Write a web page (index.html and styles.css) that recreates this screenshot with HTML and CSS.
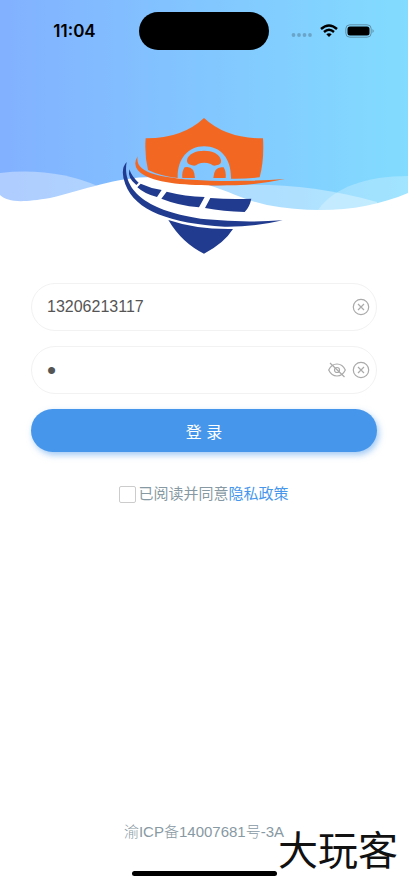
FILE: index.html
```html
<!DOCTYPE html>
<html lang="zh-CN">
<head>
    <meta charset="UTF-8">
    <meta name="viewport" content="width=device-width, initial-scale=1.0">
    <title>登录</title>
    <link rel="stylesheet" href="styles.css">
</head>
<body>
    <div class="page">
        <header class="hero">
            <svg class="waves" viewBox="0 0 408 218" preserveAspectRatio="none" aria-hidden="true">
                <path d="M0 173Q54 167 100 187L100 218H0Z" fill="#fff" fill-opacity=".36"/>
                <path d="M200 187C260 182 315 184 377 202L377 218H200Z" fill="#fff" fill-opacity=".36"/>
                <path d="M318 210C334 187 367 176 408 176V218H318Z" fill="#fff" fill-opacity=".25"/>
                <path d="M0 195C8 202 20 203 50 198C85 190 115 177 153 177C210 177 230 197 267 205C320 215 368 210 408 193V219H0Z" fill="#fff"/>
            </svg>

            <div class="status-bar">
                <span class="time">11:04</span>
                <span class="island"></span>
                <div class="status-icons">
                    <svg width="22" height="18" viewBox="0 0 22 18" fill="#6aa5c9" aria-hidden="true">
                        <circle cx="2.500" cy="13" r="1.900"/><circle cx="8" cy="13" r="1.900"/><circle cx="13.500" cy="13" r="1.900"/><circle cx="19" cy="13" r="1.900"/>
                    </svg>
                    <svg width="18" height="14" viewBox="0 0 18 14" fill="none" stroke="#000" stroke-width="2.4" aria-hidden="true">
                        <path d="M1 5Q9-2 17 5"/>
                        <path d="M4 8Q9 3.500 14 8"/>
                        <path d="M9 13L6.300 10.300Q9 8 11.700 10.300Z" fill="#000" stroke="none"/>
                    </svg>
                    <svg width="30" height="14" viewBox="0 0 30 14" aria-hidden="true">
                        <rect x=".8" y=".8" width="25.400" height="12.400" rx="4" fill="none" stroke="#5f91a8"/>
                        <rect x="2.500" y="2.500" width="22" height="9" rx="2.500"/>
                        <path d="M27.500 5Q30 7 27.500 9Z" fill="#5f91a8"/>
                    </svg>
                </div>
            </div>

            <svg class="logo" viewBox="-3 0 570 480" role="img" aria-label="logo">
                <path d="M107 100Q216 101 282 39Q349 101 459 100Q463 165 449 217Q405 222 363 221C364 161 333 124 282 124C233 124 202 163 203 219Q151 213 114 195Q103 150 107 100Z" fill="#f26822"/>
                <path d="M231 166C236 129 326 127 333 166Q335 179 319 181Q310 184 302 177Q282 169 264 177Q256 185 246 181Q230 178 231 166Z" fill="#f26822"/>
                <path d="M217 219Q215 199 224 187Q253 181 255 219ZM310 219Q312 182 341 187Q349 201 347 219Z" fill="#f26822"/>
                <path d="M83 154C73 203 145 220 300 227Q408 230 525 222Q455 237 377 241C262 243 154 240 103 211Q62 187 83 154Z" fill="#f26822"/>
                <path d="M50 171C38 236 80 317 290 343Q398 354 518 346Q435 366 344 365C181 356 75 317 46 238Q29 193 50 171Z" fill="#213b8f"/>
                <path d="M58 193Q66 216 86 233L79 240Q52 220 58 193ZM92 236Q122 250 155 255L141 276Q105 268 82 247ZM170 260Q225 274 284 276L267 307Q207 302 154 281ZM301 279Q362 284 424 281Q419 306 404 321Q340 319 285 309Z" fill="#213b8f"/>
                <path d="M175 345Q260 374 369 372Q342 415 282 446Q216 414 175 345Z" fill="#213b8f"/>
            </svg>
        </header>

        <form class="login-form">
            <div class="field">
                <input type="text" aria-label="手机号" value="13206213117">
                <button type="button" class="icon-btn" aria-label="清除手机号">
                    <svg viewBox="0 0 18 18"><circle cx="9" cy="9" r="7.700"/><path d="M6 6L12 12M12 6L6 12"/></svg>
                </button>
            </div>
            <div class="field">
                <input type="password" aria-label="密码" value="1">
                <button type="button" class="icon-btn" aria-label="显示密码">
                    <svg viewBox="0 0 18 18"><path d="M.7 9Q3.500 3 9 3T17.300 9Q14.500 15 9 15T.7 9ZM2 2L16.500 16"/><circle cx="9" cy="9" r="2.500"/></svg>
                </button>
                <button type="button" class="icon-btn" aria-label="清除密码">
                    <svg viewBox="0 0 18 18"><circle cx="9" cy="9" r="7.700"/><path d="M6 6L12 12M12 6L6 12"/></svg>
                </button>
            </div>
            <button type="submit" class="login-btn">登 录</button>
            <div class="agreement">
                <input type="checkbox" id="agree">
                <label for="agree">已阅读并同意</label><a href="#">隐私政策</a>
            </div>
        </form>

        <footer class="footer">
            <p>渝ICP备14007681号-3A</p>
            <div class="home-bar"></div>
        </footer>
        <div class="watermark">大玩客</div>
    </div>
</body>
</html>
```
FILE: styles.css
```css
* {
    box-sizing: border-box;
}

body {
    margin: 0;
    background-color: #fff;
    font-family: "Liberation Sans", "Noto Sans CJK SC", sans-serif;
}

.page {
    position: relative;
    display: flex;
    flex-direction: column;
    min-height: 100vh;
}

.hero {
    position: relative;
    display: flex;
    flex-direction: column;
    align-items: center;
}

.waves {
    position: absolute;
    top: 0;
    left: 0;
    width: 100%;
    height: 218px;
    background: linear-gradient(to right, #82b1ff, #82dcff);
}

.status-bar {
    position: relative;
    display: grid;
    grid-template-columns: 1fr 130px 1fr;
    align-items: center;
    width: 100%;
    height: 62px;
}

.time {
    padding-left: 10px;
    font-family: Inter, sans-serif;
    font-size: 17px;
    font-weight: 600;
    text-align: center;
}

.island {
    height: 38px;
    border-radius: 20px;
    background-color: #000;
}

.status-icons {
    display: flex;
    align-items: center;
    justify-content: center;
    gap: 7px;
    padding-right: 12px;
}

.logo {
    position: relative;
    width: 190px;
    height: 160px;
    margin-top: 43px;
}

.login-form {
    display: flex;
    flex-direction: column;
    gap: 15px;
    padding: 18px 31px 0;
}

.field {
    display: flex;
    align-items: center;
    gap: 6px;
    height: 48px;
    padding: 0 6px 0 15px;
    border: 1px solid #f2f2f2;
    border-radius: 24px;
}

.field input {
    flex: 1;
    min-width: 0;
    padding: 0;
    border: none;
    outline: none;
    background: none;
    color: #555;
    font-family: inherit;
    font-size: 16px;
}

.field input[type="password"] {
    font-size: 26px;
}

.icon-btn {
    width: 18px;
    height: 18px;
    padding: 0;
    border: none;
    background: none;
    cursor: pointer;
}

.icon-btn svg {
    display: block;
    fill: none;
    stroke: #aaa;
    stroke-width: 1.2;
}

.login-btn {
    height: 43px;
    border: none;
    border-radius: 22px;
    background-color: #4696ec;
    box-shadow: 2px 3px 6px rgba(70, 150, 236, 0.5);
    color: #fff;
    font-family: inherit;
    font-size: 16px;
    cursor: pointer;
}

.agreement {
    display: flex;
    align-items: center;
    justify-content: center;
    margin-top: 16px;
    color: #8799a3;
    font-size: 15px;
    line-height: 22px;
}

.agreement input {
    appearance: none;
    width: 17px;
    height: 17px;
    margin: 0 2px 0 0;
    border: 1px solid #ccc;
    border-radius: 2px;
}

.agreement input:checked {
    background-color: #4696ec;
}

.agreement a {
    color: #4696ec;
    text-decoration: none;
}

.footer {
    display: flex;
    flex-direction: column;
    align-items: center;
    gap: 28px;
    margin-top: auto;
    padding: 24px 0 7px;
    color: #8799a3;
    font-size: 15px;
    font-weight: 300;
    line-height: 22px;
}

.footer p {
    margin: 0;
}

.home-bar {
    width: 145px;
    height: 5px;
    border-radius: 3px;
    background-color: #000;
}

.watermark {
    position: absolute;
    right: 10px;
    bottom: 12px;
    color: #111;
    font-size: 40px;
    line-height: 40px;
}
```
